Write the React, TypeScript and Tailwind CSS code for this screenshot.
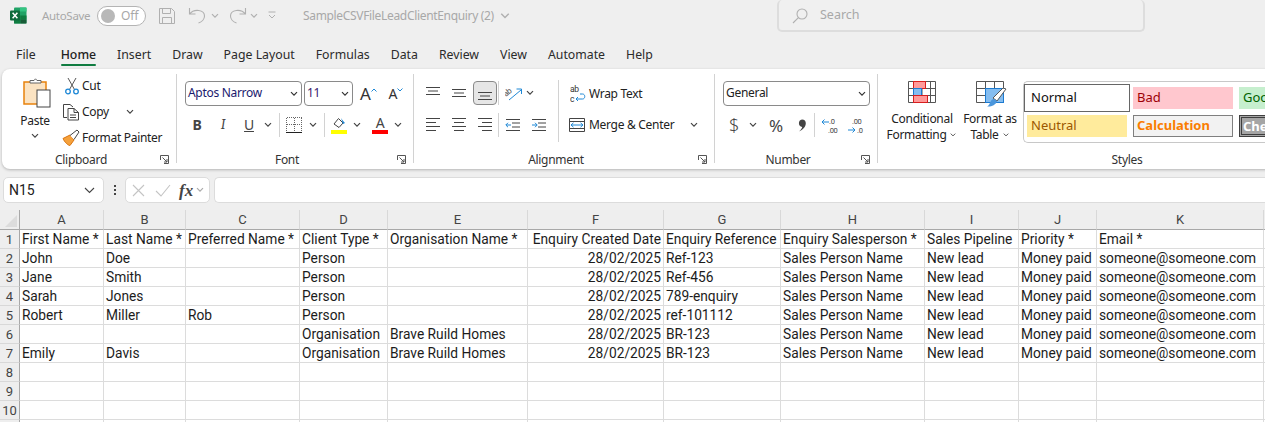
import type { ReactNode } from "react";

const columns = [
  { name: "A", align: "" },
  { name: "B", align: "" },
  { name: "C", align: "" },
  { name: "D", align: "" },
  { name: "E", align: "" },
  { name: "F", align: "text-right" },
  { name: "G", align: "" },
  { name: "H", align: "" },
  { name: "I", align: "" },
  { name: "J", align: "" },
  { name: "K", align: "" },
  { name: "", align: "" },
];

const sp = "Sales Person Name";
const mail = "someone@someone.com";
const d = "28/02/2025";
const blank = ["", "", "", "", "", "", "", "", "", "", "", ""];

const rows: string[][] = [
  ["First Name *", "Last Name *", "Preferred Name *", "Client Type *", "Organisation Name *", "Enquiry Created Date", "Enquiry Reference", "Enquiry Salesperson *", "Sales Pipeline", "Priority *", "Email *", ""],
  ["John", "Doe", "", "Person", "", d, "Ref-123", sp, "New lead", "Money paid", mail, ""],
  ["Jane", "Smith", "", "Person", "", d, "Ref-456", sp, "New lead", "Money paid", mail, ""],
  ["Sarah", "Jones", "", "Person", "", d, "789-enquiry", sp, "New lead", "Money paid", mail, ""],
  ["Robert", "Miller", "Rob", "Person", "", d, "ref-101112", sp, "New lead", "Money paid", mail, ""],
  ["", "", "", "Organisation", "Brave Ruild Homes", d, "BR-123", sp, "New lead", "Money paid", mail, ""],
  ["Emily", "Davis", "", "Organisation", "Brave Ruild Homes", d, "BR-123", sp, "New lead", "Money paid", mail, ""],
  blank,
  blank,
  blank,
];

const tabs = ["File", "Home", "Insert", "Draw", "Page Layout", "Formulas", "Data", "Review", "View", "Automate", "Help"];

function Chevron({ className = "", color = "#444" }: { className?: string; color?: string }) {
  return (
    <svg className={`shrink-0 ${className}`} width="8" height="6" viewBox="0 0 8 6" fill="none">
      <path d="M1 1.2 L4 4.2 L7 1.2" stroke={color} strokeWidth="1.2" />
    </svg>
  );
}

function Launcher() {
  return (
    <svg className="shrink-0" width="9" height="9" viewBox="0 0 9 9" fill="none" stroke="#555">
      <path d="M0.5 5 V0.5 H8.5 V8.5 H4" />
      <path d="M2.5 2.5 L7 7 M7 4 V7 H4" />
    </svg>
  );
}

function VLine({ className }: { className: string }) {
  return <div className={`w-px shrink-0 bg-[#d2d2d2] ${className}`} />;
}

function Group({ label, launcher, className, children }: { label: string; launcher?: boolean; className: string; children: ReactNode }) {
  return (
    <div className={`flex h-full shrink-0 flex-col ${className}`}>
      <div className="flex-1">{children}</div>
      <div className="mb-px flex h-[17px] items-center text-[12px] leading-none text-[#333]">
        <div className="flex-1 text-center">{label}</div>
        {launcher && (
          <div className="flex w-[16px] justify-start">
            <Launcher />
          </div>
        )}
      </div>
    </div>
  );
}

function Lines({ widths, x = "left" }: { widths: number[]; x?: "left" | "center" | "right" }) {
  return (
    <svg className="shrink-0" width="16" height="16" viewBox="0 0 16 16" stroke="#444" strokeWidth="1">
      {widths.map((w, i) => {
        const start = x === "left" ? 1 : x === "right" ? 15 - w : 8 - w / 2;
        const y = 16 - widths.length * 4 + i * 4 + 1.5;
        return <path key={i} d={`M${start} ${y} h${w}`} />;
      })}
    </svg>
  );
}

function VAlign({ pos }: { pos: "top" | "mid" | "bot" }) {
  const base = pos === "top" ? 2.5 : pos === "mid" ? 4.5 : 7.5;
  return (
    <svg className="shrink-0" width="16" height="16" viewBox="0 0 16 16" stroke="#444" strokeWidth="1">
      <path d={`M1 ${base} h14 M3 ${base + 3.5} h10 M1 ${base + 7} h14`} />
    </svg>
  );
}

function Indent({ flip }: { flip?: boolean }) {
  return (
    <svg className="shrink-0" width="16" height="16" viewBox="0 0 16 16" fill="none">
      <path d="M1 2.5 h14 M7 6 h8 M7 10 h8 M1 13.5 h14" stroke="#444" />
      <path d={flip ? "M1 8 h5 M4 5.8 L6.2 8 L4 10.2" : "M6 8 h-5 M3 5.8 L0.8 8 L3 10.2"} stroke="#1e88d6" />
    </svg>
  );
}

function Select({ value, className }: { value: string; className: string }) {
  return (
    <div className={`flex h-[25px] shrink-0 items-center rounded-[4px] border border-[#8a8a8a] pb-[2px] pl-[2px] text-[12px] leading-none ${className}`}>
      <span>{value}</span>
      <Chevron className="ml-auto mr-[3px] mt-[2px]" color="#333" />
    </div>
  );
}

function ExcelLogo() {
  return (
    <svg width="17" height="17" viewBox="0 0 17 17" className="shrink-0">
      <rect x="4" y="0.5" width="12.5" height="16" rx="1" fill="#21a366" />
      <rect x="10" y="0.5" width="6.5" height="4" fill="#33c481" />
      <rect x="4" y="8.5" width="6.5" height="8" fill="#107c41" />
      <rect x="10.5" y="8.5" width="6" height="4" fill="#107c41" />
      <rect x="10.5" y="12.5" width="6" height="4" fill="#185c37" />
      <rect x="0" y="3.5" width="10" height="10" rx="1" fill="#0f6b3c" />
      <path d="M2.6 5.8 L7.4 11.2 M7.4 5.8 L2.6 11.2" stroke="#fff" strokeWidth="1.5" />
    </svg>
  );
}

function TitleBar() {
  return (
    <div className="flex h-[31px] items-center text-[12px] text-[#a8a8a8]">
      <div className="ml-[10px]"><ExcelLogo /></div>
      <span className="ml-[15px] w-[47px] whitespace-nowrap text-[11.5px] leading-none tracking-[-0.3px]">AutoSave</span>
      <div className="ml-[8px] flex h-[20px] w-[49px] items-center rounded-full border border-[#b4b4b4] bg-white px-[3px]">
        <div className="h-[14px] w-[14px] rounded-full bg-[#b8b8b8]" />
        <span className="ml-[6px] text-[12px] leading-none">Off</span>
      </div>
      <svg className="ml-[13px] shrink-0" width="16" height="16" viewBox="0 0 16 16" fill="none" stroke="#b0b0b0">
        <path d="M0.5 0.5 H12.5 L15.5 3.5 V15.5 H0.5 Z M3.5 0.5 V5.5 H11.5 V0.5 M3.5 15.5 V9.5 H12.5 V15.5" />
      </svg>
      <svg className="ml-[13px] shrink-0" width="18" height="17" viewBox="0 0 18 17" fill="none" stroke="#b0b0b0" strokeWidth="1.1">
        <path d="M1.5 1 V7 H7.5 M1.5 7 C6 1.5 16.5 2.5 16.5 9 C16.5 12 14 15 10.5 16" />
      </svg>
      <Chevron className="ml-[5px]" color="#b0b0b0" />
      <svg className="ml-[10px] shrink-0" width="18" height="17" viewBox="0 0 18 17" fill="none" stroke="#b0b0b0" strokeWidth="1.1">
        <path d="M16.5 1 V7 H10.5 M16.5 7 C12 1.5 1.5 2.5 1.5 9 C1.5 12 4 15 7.5 16" />
      </svg>
      <Chevron className="ml-[3px]" color="#b0b0b0" />
      <svg className="ml-[10px] shrink-0" width="8" height="9" viewBox="0 0 8 9" fill="none" stroke="#b0b0b0">
        <path d="M0.5 1 H7.5 M1 4 L4 7 L7 4" />
      </svg>
      <span className="ml-[27px] whitespace-nowrap leading-none tracking-[-0.33px]">SampleCSVFileLeadClientEnquiry (2)</span>
      <Chevron className="ml-[7px] scale-125" color="#b0b0b0" />
      <div className="ml-auto mr-[120px] flex h-[32px] w-[368px] items-center self-start rounded-[5px] border-2 border-t-0 border-[#dddddd] bg-[#f0f0f0] pl-[13px] pt-[1px] text-[12.5px]">
        <svg width="16" height="16" viewBox="0 0 16 16" fill="none" stroke="#b0b0b0" strokeWidth="1.1">
          <circle cx="10" cy="6" r="5" />
          <path d="M6.4 9.6 L1 15" />
        </svg>
        <span className="ml-[12px] leading-none">Search</span>
      </div>
    </div>
  );
}

function TabRow() {
  return (
    <div className="mt-[9px] flex h-[29px] gap-[21px] pl-[16px] text-[12.3px] text-[#2b2b2b]">
      {tabs.map((t) => (
        <div key={t} className={`relative pt-[7px] leading-[16px] whitespace-nowrap ${t === "File" ? "mr-[4px]" : ""} ${t === "Home" ? "font-medium" : ""}`}>
          <span className={t === "Home" ? "text-[#222]" : ""}>{t}</span>
          {t === "Home" && <div className="absolute bottom-[3px] left-0 right-0 h-[2px] rounded bg-[#107c41]" />}
        </div>
      ))}
    </div>
  );
}

function ClipboardGroup() {
  return (
    <Group label="Clipboard" launcher className="w-[174px]">
      <div className="flex">
        <div className="ml-[14px] flex w-[38px] flex-col items-center pt-[9px]">
          <svg className="ml-[4px]" width="28" height="30" viewBox="0 0 28 30" fill="none">
            <rect x="1" y="4" width="22" height="22" fill="#fbe3c2" stroke="#e8820c" strokeWidth="1.5" />
            <path d="M7 5 V2.5 H11 L12.5 0.8 L14 2.5 H18 V5 H7Z" fill="#fff" stroke="#666" />
            <rect x="14" y="12" width="13" height="17" fill="#fff" stroke="#444" />
          </svg>
          <span className="mt-[5px] text-[12px] leading-[16px] text-[#222]">Paste</span>
          <Chevron className="mt-[4px]" />
        </div>
        <div className="ml-[8px] pt-[4px] text-[12px] leading-none text-[#222]">
          <div className="flex h-[26px] items-center">
            <svg className="ml-[2px] shrink-0" width="16" height="18" viewBox="0 0 16 18" fill="none">
              <path d="M4 1 L10.5 12.5 M12 1 L5.5 12.5" stroke="#555" />
              <circle cx="4" cy="14.5" r="2.3" stroke="#1e88d6" strokeWidth="1.3" />
              <circle cx="12" cy="14.5" r="2.3" stroke="#1e88d6" strokeWidth="1.3" />
            </svg>
            <span className="ml-[2px]">Cut</span>
          </div>
          <div className="flex h-[26px] items-center">
            <svg className="shrink-0" width="18" height="18" viewBox="0 0 18 18" fill="none" stroke="#444">
              <path d="M5 14.5 H1.5 V1.5 H8 L11 4 M6 5.5 H12 L16.5 9.5 V17 H6 Z M12 5.5 V9.5 H16.5 M8 12 H14 M8 14.5 H14" />
            </svg>
            <span className="ml-[2px]">Copy</span>
            <Chevron className="ml-[17px]" />
          </div>
          <div className="flex h-[26px] items-center">
            <svg className="shrink-0" width="18" height="18" viewBox="0 0 18 18" fill="none">
              <path d="M1 9.5 L8 6 L12 11 L8 16.5 C6 16.5 2.5 13 1 9.5Z" fill="#f5a13c" stroke="#d9730d" />
              <path d="M8 6.5 L15 1 L17 3 L12 10.5" fill="#fff" stroke="#444" />
            </svg>
            <span className="ml-[2px] whitespace-nowrap">Format Painter</span>
          </div>
        </div>
      </div>
    </Group>
  );
}

function FontGroup() {
  return (
    <Group label="Font" launcher className="w-[236px]">
      <div className="flex items-center pl-[8px] pt-[12px]">
        <Select value="Aptos Narrow" className="w-[117px] text-[#1a1a6e]" />
        <Select value="11" className="ml-[2px] w-[49px] text-[#3a1a6e]" />
        <span className="ml-[7px] text-[17px] leading-none text-[#333]">A</span>
        <svg className="mb-[8px] shrink-0" width="6" height="4" viewBox="0 0 6 4" fill="none" stroke="#1e88d6">
          <path d="M0.5 3.5 L3 1 L5.5 3.5" />
        </svg>
        <span className="ml-[12px] text-[14px] leading-none text-[#333]">A</span>
        <svg className="mb-[8px] shrink-0" width="6" height="4" viewBox="0 0 6 4" fill="none" stroke="#1e88d6">
          <path d="M0.5 0.5 L3 3 L5.5 0.5" />
        </svg>
      </div>
      <div className="mt-[7px] flex h-[24px] items-center text-[14px] leading-none text-[#444]">
        <span className="ml-[13px] w-[14px] text-center font-bold">B</span>
        <span className="ml-[12px] w-[14px] text-center font-serif italic">I</span>
        <span className="ml-[12px] w-[14px] text-center underline">U</span>
        <Chevron className="ml-[8px]" />
        <VLine className="ml-[7px] h-[24px]" />
        <svg className="ml-[6px] shrink-0" width="16" height="16" viewBox="0 0 16 16" fill="none" shapeRendering="crispEdges">
          <path d="M0.5 0.5 H15.5 M0.5 0.5 V15 M15.5 0.5 V15 M8 0.5 V15 M0.5 7.5 H15.5" stroke="#666" strokeDasharray="1 1" />
          <path d="M0 15.5 H16" stroke="#222" />
        </svg>
        <Chevron className="ml-[7px]" />
        <VLine className="ml-[7px] h-[24px]" />
        <div className="ml-[6px] flex w-[16px] flex-col items-center">
          <svg width="14" height="12" viewBox="0 0 14 12" fill="none">
            <path d="M2 7 L6.5 1.5 L11 6 L7 10.5 Z" fill="#fff" stroke="#444" />
            <path d="M9 1 C10 3 11.5 4 13 6 L11 7 Z" fill="#1e88d6" />
          </svg>
          <div className="mt-px h-[4px] w-[16px] bg-[#ffff00]" />
        </div>
        <Chevron className="ml-[6px]" />
        <div className="ml-[11px] flex w-[16px] flex-col items-center">
          <span className="h-[12px] text-[14px] leading-[12px] text-[#444]">A</span>
          <div className="mt-px h-[4px] w-[16px] bg-[#ff0000]" />
        </div>
        <Chevron className="ml-[6px]" />
      </div>
    </Group>
  );
}

function AlignmentGroup() {
  return (
    <Group label="Alignment" launcher className="w-[300px]">
      <div className="flex pt-[11px]">
        <div className="flex w-[144px] flex-col">
          <div className="flex h-[26px] items-center">
            <div className="ml-[11px]"><VAlign pos="top" /></div>
            <div className="ml-[10px]"><VAlign pos="mid" /></div>
            <div className="ml-[6px] flex h-[24px] w-[24px] items-center justify-center rounded-[4px] border border-[#8a8a8a] bg-[#e6e6e6]">
              <VAlign pos="bot" />
            </div>
            <VLine className="ml-[1px] h-[24px]" />
            <svg className="ml-[6px] shrink-0" width="18" height="18" viewBox="0 0 18 18" fill="none">
              <path d="M4 16 L16 6 M11.5 5 H16.5 V10" stroke="#1e88d6" />
              <text x="1" y="13" fontSize="8" fill="#555" fontFamily="Roboto, sans-serif" transform="rotate(-40 1 13)">ab</text>
            </svg>
            <Chevron className="ml-[3px]" />
          </div>
          <div className="mt-[7px] flex h-[24px] items-center">
            <div className="ml-[11px]"><Lines widths={[14, 10, 14, 10]} /></div>
            <div className="ml-[10px]"><Lines widths={[14, 10, 14, 10]} x="center" /></div>
            <div className="ml-[10px]"><Lines widths={[14, 10, 14, 10]} x="right" /></div>
            <VLine className="ml-[5px] h-[24px]" />
            <div className="ml-[6px]"><Indent /></div>
            <div className="ml-[10px]"><Indent flip /></div>
          </div>
        </div>
        <VLine className="h-[62px]" />
        <div className="flex flex-col pt-px text-[12px] leading-none text-[#222]">
          <div className="flex h-[26px] items-center">
            <svg className="ml-[11px] shrink-0" width="16" height="20" viewBox="0 0 16 20">
              <text x="0" y="8" fontSize="8.5" fontFamily="Roboto, sans-serif" fill="#333">ab</text>
              <text x="0" y="18" fontSize="8.5" fontFamily="Roboto, sans-serif" fill="#333">c</text>
              <path d="M6 15 H12.5 C15.5 15 15.5 10 12.5 10 H10 M8 13 L6 15 L8 17" fill="none" stroke="#1e88d6" />
            </svg>
            <span className="ml-[3px]">Wrap Text</span>
          </div>
          <div className="mt-[6px] flex h-[24px] items-center">
            <svg className="ml-[10px] shrink-0" width="16" height="16" viewBox="0 0 16 16" fill="none">
              <path d="M0.5 1.5 H15.5 V14.5 H0.5 Z M0.5 4.5 H15.5 M0.5 11.5 H15.5" stroke="#444" />
              <path d="M2 8 H14 M4.5 5.8 L2 8 L4.5 10.2 M11.5 5.8 L14 8 L11.5 10.2" stroke="#1e88d6" />
            </svg>
            <span className="ml-[4px] whitespace-nowrap">Merge &amp; Center</span>
            <Chevron className="ml-[16px]" />
          </div>
        </div>
      </div>
    </Group>
  );
}

function NumberGroup() {
  return (
    <Group label="Number" launcher className="w-[162px]">
      <div className="pl-[8px] pt-[12px]">
        <Select value="General" className="w-[147px] text-[#222]" />
      </div>
      <div className="mt-[7px] flex h-[24px] items-center leading-none text-[#444]">
        <span className="ml-[12px] w-[14px] text-center text-[18px] font-light">$</span>
        <Chevron className="ml-[8px]" />
        <span className="ml-[10px] w-[18px] text-center text-[17px]">%</span>
        <svg className="ml-[12px] shrink-0" width="10" height="13" viewBox="0 0 10 13" fill="#444">
          <path d="M5 0.5 a3.8 3.8 0 0 1 3.8 3.8 C8.8 8 6 10.8 2 12.5 C4 10.5 5 9.5 5.2 8 a3.8 3.8 0 0 1 -0.2 -7.5Z" />
        </svg>
        <VLine className="ml-[7px] h-[24px]" />
        <svg className="ml-[6px] shrink-0" width="18" height="20" viewBox="0 0 18 20">
          <text x="8" y="9" fontSize="7.5" fontFamily="Roboto, sans-serif" fill="#444">.0</text>
          <text x="7" y="18" fontSize="7.5" fontFamily="Roboto, sans-serif" fill="#444">.00</text>
          <path d="M8 7 H1 M3.5 4.5 L1 7 L3.5 9.5" fill="none" stroke="#1e88d6" />
        </svg>
        <svg className="ml-[8px] shrink-0" width="18" height="20" viewBox="0 0 18 20">
          <text x="5" y="9" fontSize="7.5" fontFamily="Roboto, sans-serif" fill="#444">.00</text>
          <text x="10" y="18" fontSize="7.5" fontFamily="Roboto, sans-serif" fill="#444">.0</text>
          <path d="M1 15 H8 M5.5 12.5 L8 15 L5.5 17.5" fill="none" stroke="#1e88d6" />
        </svg>
      </div>
    </Group>
  );
}

function CondIcon() {
  return (
    <svg width="28" height="23" viewBox="0 0 28 23" fill="none">
      <path d="M0.5 0.5 H27.5 V21.5 H0.5 Z M0.5 7.5 H27.5 M0.5 14.5 H27.5 M5.5 0.5 V21.5 M22.5 0.5 V21.5 M14 0.5 V21.5" stroke="#555" />
      <rect x="5.5" y="0.5" width="12" height="7" fill="#ff9a9a" stroke="#d81e1e" />
      <rect x="5.5" y="7.5" width="8" height="7" fill="#85bdf0" stroke="#1c7ad0" />
      <rect x="5.5" y="14.5" width="14" height="7" fill="#ff9a9a" stroke="#d81e1e" />
    </svg>
  );
}

function TableIcon() {
  return (
    <svg className="ml-[2px]" width="31" height="27" viewBox="0 0 31 27" fill="none">
      <path d="M0.5 0.5 H27.5 V21.5 H0.5 Z M0.5 7.5 H27.5 M0.5 14.5 H27.5 M9.5 0.5 V21.5 M18.5 0.5 V21.5" stroke="#555" />
      <rect x="9.5" y="7.5" width="18" height="14" fill="#85bdf0" stroke="#1c7ad0" />
      <path d="M17 17 L27 7 L30 8 L21 20 Z" fill="#fff" stroke="#555" />
      <path d="M11 25.5 C14 25 14 18 18 18 L21 20 C20 24 15 26 11 25.5Z" fill="#4a96dc" />
    </svg>
  );
}

function StylesGroup() {
  return (
    <Group label="Styles" className="w-[498px]">
      <div className="flex pt-[12px]">
        <div className="ml-[4px] flex w-[80px] flex-col items-center text-[12px] leading-[16px] text-[#222]">
          <CondIcon />
          <span className="mt-[7px]">Conditional</span>
          <span className="flex items-center whitespace-nowrap">Formatting<Chevron className="ml-[3px] scale-75" /></span>
        </div>
        <div className="flex w-[56px] flex-col items-center text-[12px] leading-[16px] text-[#222]">
          <TableIcon />
          <span className="mt-[3px] whitespace-nowrap">Format as</span>
          <span className="flex items-center">Table<Chevron className="ml-[3px] scale-75" /></span>
        </div>
        <div className="ml-[5px] grid h-[62px] w-[340px] grid-cols-[100px_100px_100px] grid-rows-[22px_22px] gap-[6px] rounded-l-[5px] border border-r-0 border-[#c8c8c8] pl-[3px] pt-[5px] text-[13px] leading-none tracking-normal">
          <div className="flex items-center bg-white pb-[2px] pl-[4px] text-[#111] outline-[1.5px] outline-offset-[2px] outline-[#666] outline-solid">Normal</div>
          <div className="flex items-center bg-[#ffc7ce] pb-[2px] pl-[4px] text-[#9c0006]">Bad</div>
          <div className="flex items-center bg-[#c6efce] pb-[2px] pl-[4px] text-[#006100]">Good</div>
          <div className="flex items-center bg-[#ffeb9c] pb-[2px] pl-[4px] text-[#9c5700]">Neutral</div>
          <div className="flex items-center border border-[#7f7f7f] bg-[#f2f2f2] pb-[2px] pl-[3px] font-bold text-[#fa7d00]">Calculation</div>
          <div className="flex items-center border-[3px] border-double border-[#3f3f3f] bg-[#a5a5a5] pl-[1px] font-bold text-white">Check Cell</div>
        </div>
      </div>
    </Group>
  );
}

function Ribbon() {
  return (
    <div className="ml-[2px] flex h-[100px] w-[1400px] rounded-l-[8px] bg-white tracking-[-0.3px] shadow-[0_1px_3px_rgba(0,0,0,0.25)]">
      <ClipboardGroup />
      <VLine className="mt-[5px] h-[89px]" />
      <FontGroup />
      <VLine className="mt-[5px] h-[89px]" />
      <AlignmentGroup />
      <VLine className="mt-[5px] h-[89px]" />
      <NumberGroup />
      <VLine className="mt-[5px] h-[89px]" />
      <StylesGroup />
    </div>
  );
}

function FormulaBar() {
  return (
    <div className="mt-[8px] flex h-[26px] items-stretch">
      <div className="ml-[3px] flex w-[101px] items-center rounded-[5px] border border-[#dcdcdc] bg-white pl-[5px] font-['Roboto',sans-serif] text-[14px] leading-none text-[#222]">
        N15
        <svg className="ml-auto mr-[8px]" width="11" height="7" viewBox="0 0 11 7" fill="none" stroke="#444" strokeWidth="1.1">
          <path d="M1 1 L5.5 5.5 L10 1" />
        </svg>
      </div>
      <div className="flex w-[21px] flex-col items-center justify-center gap-[2px]">
        <div className="h-[2px] w-[2px] bg-[#444]" />
        <div className="h-[2px] w-[2px] bg-[#444]" />
        <div className="h-[2px] w-[2px] bg-[#444]" />
      </div>
      <div className="flex w-[85px] items-center rounded-[5px] border border-[#dcdcdc] bg-white pl-[6px]">
        <svg width="13" height="13" viewBox="0 0 13 13" fill="none" stroke="#c4c4c4" strokeWidth="1.1">
          <path d="M1 1 L12 12 M12 1 L1 12" />
        </svg>
        <svg className="ml-[10px]" width="16" height="13" viewBox="0 0 16 13" fill="none" stroke="#c4c4c4" strokeWidth="1.1">
          <path d="M1 7 L6 12 L15 1" />
        </svg>
        <span className="ml-[8px] font-['Liberation_Serif',serif] text-[17px] font-semibold italic leading-none text-[#444]">fx</span>
        <Chevron className="ml-[3px]" color="#aaa" />
      </div>
      <div className="ml-[4px] flex-1 rounded-l-[5px] border border-r-0 border-[#dcdcdc] bg-white" />
    </div>
  );
}

function Sheet() {
  return (
    <div className="mt-[7px] grid grid-cols-[20px_84px_82px_114px_88px_140px_136px_117px_144px_94px_78px_167px_20px] grid-rows-[20px] auto-rows-[19px] font-['Roboto',sans-serif] text-[13.75px] leading-none">
      <div className="relative border-r border-b border-r-[#a8a8a8] border-b-[#a8a8a8] bg-[#eeeeee]">
        <svg className="absolute bottom-[2px] right-[2px]" width="12" height="12" viewBox="0 0 12 12">
          <path d="M12 0 V12 H0 Z" fill="#dcdcdc" />
        </svg>
      </div>
      {columns.map((c, i) => (
        <div key={i} className="flex items-center justify-center border-r border-b border-r-[#d8d8d8] border-b-[#a8a8a8] bg-[#eeeeee] text-[13px] text-[#444]">
          {c.name}
        </div>
      ))}
      {[...rows, blank].map((row, r) => (
        <div key={r} className="contents">
          <div className="flex items-center justify-center border-r border-b border-r-[#a8a8a8] border-b-[#d8d8d8] bg-[#eeeeee] text-[13px] text-[#444]">
            {r < 10 ? r + 1 : ""}
          </div>
          {row.map((cell, c) => (
            <div key={c} className={`flex items-center overflow-visible whitespace-nowrap border-r border-b border-[#dcdcdc] bg-white px-[2px] pt-[2px] text-[#1c1c1c] ${columns[c].align === "text-right" ? "justify-end" : ""}`}>
              {cell}
            </div>
          ))}
        </div>
      ))}
    </div>
  );
}

export default function App() {
  return (
    <div className="h-[422px] w-[1265px] overflow-hidden bg-[#efefef] font-['Noto_Sans',sans-serif]">
      <TitleBar />
      <TabRow />
      <Ribbon />
      <FormulaBar />
      <Sheet />
    </div>
  );
}
